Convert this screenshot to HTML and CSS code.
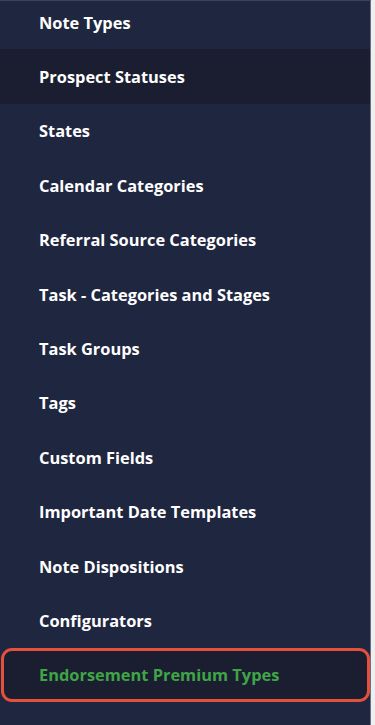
FILE: index.html
```html
<!DOCTYPE html>
<html lang="en">
<head>
    <meta charset="UTF-8">
    <meta name="viewport" content="width=device-width, initial-scale=1.0">
    <title>Settings Menu</title>
    <link rel="stylesheet" href="styles.css">
</head>
<body>

    <nav class="side-menu">
        <ul class="menu-list">
            <li class="menu-item">Note Types</li>
            <li class="menu-item hover">Prospect Statuses</li>
            <li class="menu-item">States</li>
            <li class="menu-item">Calendar Categories</li>
            <li class="menu-item">Referral Source Categories</li>
            <li class="menu-item">Task - Categories and Stages</li>
            <li class="menu-item">Task Groups</li>
            <li class="menu-item">Tags</li>
            <li class="menu-item">Custom Fields</li>
            <li class="menu-item">Important Date Templates</li>
            <li class="menu-item">Note Dispositions</li>
            <li class="menu-item">Configurators</li>
            <li class="menu-item active">Endorsement Premium Types</li>
        </ul>
    </nav>

</body>
</html>
```

FILE: styles.css
```css
* {
    margin: 0;
    padding: 0;
    box-sizing: border-box;
}
body {
    font-family: 'Open Sans', 'Noto Sans', sans-serif;
    background-color: #efefef;
    height: 100vh;
    overflow: hidden;
}
.side-menu {
    width: 371px;
    height: 100%;
    background-color: #1f2640;
    border-top: 1px solid #3a4160;
    border-right: 1px solid #6c7080;
    overflow: hidden;
}
.menu-list {
    list-style: none;
    margin-top: -6px;
}
.menu-item {
    height: 54.4px;
    display: flex;
    align-items: center;
    padding-left: 39px;
    font-size: 16.4px;
    font-weight: 700;
    color: #ffffff;
}
.menu-item.hover {
    background-color: #1a1e30;
}
.menu-item.active {
    color: #3fa546;
    background-color: #1a1e30;
    border: 3px solid #e4503c;
    border-radius: 11px;
    margin-left: 1px;
    padding-left: 35px;
}
```
